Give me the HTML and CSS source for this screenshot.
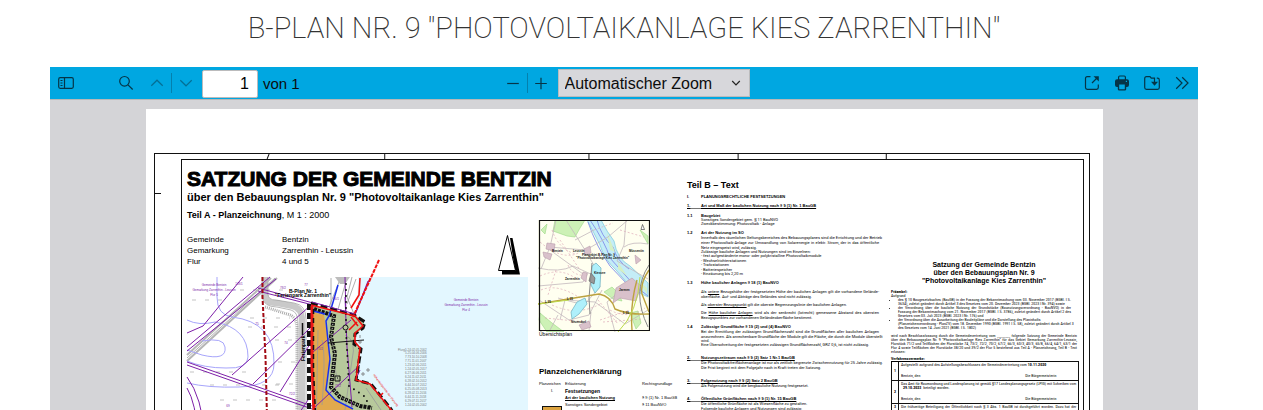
FILE: index.html
```html
<!DOCTYPE html>
<html lang="de">
<head>
<meta charset="utf-8">
<title>B-Plan Nr. 9</title>
<link rel="stylesheet" href="styles.css">
</head>
<body>
<h1 class="title">B-Plan Nr. 9 "Photovoltaikanlage Kies Zarrenthin"</h1>
<main class="viewer">
  <div class="toolbar">
    <div class="group">
      <button class="tool" aria-label="Sidebar umschalten"><svg width="16" height="16" viewBox="0 0 16 16"><rect x="0.7" y="2.7" width="14.6" height="10.6" rx="1.5"/><path d="M6.5 3v10M2.5 5.5h2M2.5 8h2M2.5 10.5h2"/></svg></button>
      <button class="tool search" aria-label="Suchen"><svg width="16" height="16" viewBox="0 0 16 16"><circle cx="6.5" cy="6.3" r="4.8"/><path d="M10 9.8l4.7 4.7"/></svg></button>
      <button class="tool" disabled aria-label="Vorherige Seite"><svg width="16" height="16" viewBox="0 0 16 16"><path d="M2.3 10.8L8 5.2l5.7 5.6"/></svg></button>
      <span class="separator"></span>
      <button class="tool" disabled aria-label="Nächste Seite"><svg width="16" height="16" viewBox="0 0 16 16"><path d="M2.3 5.2L8 10.8l5.7-5.6"/></svg></button>
      <input class="page-number" type="text" value="1" aria-label="Seite">
      <span class="page-count">von 1</span>
    </div>
    <div class="group">
      <button class="tool" aria-label="Verkleinern"><svg width="16" height="16" viewBox="0 0 16 16"><path d="M2.2 8.5h11.6"/></svg></button>
      <span class="separator"></span>
      <button class="tool" aria-label="Vergrößern"><svg width="16" height="16" viewBox="0 0 16 16"><path d="M1.2 8.500h11.600M7 2.700v11.600"/></svg></button>
      <span class="zoom-box">
        <select class="zoom" aria-label="Zoom"><option>Automatischer Zoom</option></select>
        <svg class="caret" width="10" height="8" viewBox="0 0 10 8"><path d="M1.2 2L5 5.8 8.8 2"/></svg>
      </span>
    </div>
    <div class="group end">
      <button class="tool" aria-label="Aktuelle Ansicht"><svg width="16" height="16" viewBox="0 0 16 16"><path d="M6.5 1.7H3.2Q1.5 1.7 1.5 3.4v9.2q0 1.7 1.7 1.7h9.4q1.7 0 1.7-1.7V9.5M8 8l5-5"/><path class="solid" d="M9.5 1.2H14.8V6.5z"/></svg></button>
      <button class="tool" aria-label="Drucken"><svg width="16" height="16" viewBox="0 0 16 16"><path d="M4.6 5V2.2Q4.6 1 5.8 1h4.4q1.2 0 1.2 1.2V5"/><path class="solid" fill-rule="evenodd" d="M3 4.2h10q2 0 2 2V10q0 2-2 2h-.8v2.2q0 1.4-1.4 1.4H5.2q-1.4 0-1.4-1.4V12H3q-2 0-2-2V6.200q0-2 2-2zM5.200 9.500v4.200q0 .6.6.6h4.400q.6 0 .6-.6V9.500zM11.800 5.800v1.200H13V5.800z"/></svg></button>
      <button class="tool" aria-label="Speichern"><svg width="16" height="16" viewBox="0 0 16 16"><path d="M10 3.200H7.300L6 1.700H2.500Q.7 1.700.7 3.500v9q0 1.800 1.800 1.800h11q1.800 0 1.800-1.800V5q0-1.800-1.800-1.800H12.800M10.500 2.500v6"/><path class="solid" d="M7 6.800h7L10.500 10.800z"/></svg></button>
      <button class="tool" aria-label="Werkzeuge"><svg width="16" height="16" viewBox="0 0 16 16"><path d="M2.200 2.300L8 8l-5.800 5.700M8.200 2.300L14 8l-5.800 5.700"/></svg></button>
    </div>
  </div>

  <div class="stage">
  <article class="sheet">
    <div class="frame">
      <svg class="rule-left" width="26" height="260" viewBox="0 0 26 260"><path d="M0 39.500h6"/></svg>
      <div class="frame-body">
      <svg class="rule-top" height="5" viewBox="0 0 902 5" preserveAspectRatio="none"><path d="M88 0L86 5M203.500 0v5M407.500 0v5M556.500 0v5M704.500 0v5"/></svg>
      <div class="plan">

        <section class="part-a">
          <h2 class="plan-title">SATZUNG DER GEMEINDE BENTZIN</h2>
          <p class="plan-subtitle">über den Bebauungsplan Nr. 9 "Photovoltaikanlage Kies Zarrenthin"</p>
          <p class="plan-part"><b>Teil A - Planzeichnung</b>, M 1 : 2000</p>
          <div class="meta-row">
            <dl class="meta"><dt>Gemeinde</dt><dd>Bentzin</dd><dt>Gemarkung</dt><dd>Zarrenthin - Leussin</dd><dt>Flur</dt><dd>4 und 5</dd></dl>
            <svg width="24" height="42" viewBox="497 234 24 42"><path d="M510 238h2.500L520 274.500H502v-4h13z" fill="#000"/><path d="M507.500 235.500L498.500 270.500H515.500z" fill="#fff" stroke="#000"/></svg>
          </div>
          <svg class="site-map" viewBox="187 277 341 160">
            <path fill="#e3f7ff" d="M358 277H528V437H375L355 380z"/>
            <g fill="none" stroke="#9a9a9a">
              <path stroke="#c9c9c9" stroke-width="6" d="M265 277v18q1 9 12 8l15 3q10 2 10 14v117"/>
              <path stroke-width=".7" d="M262 277v20q2 10 15 10l14 3q7 2 7 13v114M268 277v17q0 6 8 6l18 3q12 2 12 16v118"/>
              <path stroke-width="3" stroke="#aaa" stroke-dasharray="1 1" d="M265 307l22 7q10 2 10 15v100"/>
              <path stroke-width="2" stroke="#b5b5b5" d="M271 278L187 355M277 278L187 361"/>
              <path stroke-width=".8" d="M275 278L187 358M331 278v32M345 285l-8 28M341 277l-12 30M325 320v60M352 277l-5 20 7 17M356 279l-9 25"/>
              <path stroke-width=".6" stroke-dasharray="4 9" d="M240 290h45M250 318h40M248 327h45M275 340h20M278 362h20M190 372h60M210 385h70M220 400h60M276 384h20M192 300h30"/>
              <path fill="#bdbdbd" stroke="none" d="M335 277h15l-5 7h-5z"/>
            </g>
            <g fill="none" stroke="#a7a5fb" stroke-width="1">
              <path d="M217 277v20q0 18 15 20 43 5 42 47 0 22-35 23-30 1-52-4M187 320q12 6 28 2 33 6 33 35 0 12-22 11-22 0-39-7M202 341q22-4 23 6 2 14-23 8l-15-5"/>
            </g>
            <g fill="none" stroke="#7d1fa8" stroke-width="1">
              <path d="M243 277L203 326l-16 7M270 277L187 347M276 279L187 351M187 362L315 407M187 365l128 45M258 288l55 15M258 291l55 14M311 305L232 375M311 327L253 384M325 320L280 392M308 400L283 437M187 377q15 20 18 60M187 388q9 15 11 49M345 277l4 160M360 370l-30 67"/>
            </g>
            <path fill="#b7c99c" d="M312 305l50 13 3 8-9 8-2 10 7 5-3 14-3 17 14 4 21 26v27h-78z"/>
            <path fill="#e1a94e" d="M313 312l11 3 3 20 3 23-4 32 9 10 17 9 3 28h-42z"/>
            <g fill="none" stroke="#999" stroke-width=".8"><path d="M345 335q12 5 7 25l-7 50M337 350q-6 20 4 35M366 388l17 25M318 330l-2 100M322 340q4 15 0 65"/></g>
            <path fill="none" stroke="#7d1fa8" stroke-width="1" d="M345 297l2 50 5 60M351 320L313 352M360 365l-45 42M370 278l-15 37"/>
            <path fill="none" stroke="#111" stroke-width="4" stroke-dasharray="3 1" d="M314 309l20 7-3 21 4 17-4 33 9 10 20 9 12 2"/>
            <path fill="none" stroke="#ddd" stroke-width="1" stroke-dasharray="1 3" d="M334 316l-3 21 4 17-4 33 9 10 20 9"/>
            <path fill="none" stroke="#1b30ee" stroke-width="1.500" d="M338 285l-9 31-3 5 2 20 2 18-4 31 9 10 18 9M313 311l12 3"/>
            <path fill="none" stroke="#111" stroke-width="2" stroke-linecap="round" stroke-dasharray="0 6" d="M346 284v47l3 55 15 10 20 35"/>
            <circle cx="345.500" cy="327.500" r="2.500" fill="#b7c99c" stroke="#111"/>
            <path fill="none" stroke="#111" d="M328 343l36-3M335 376h5v5h-5zM337 378h1"/>
            <path fill="none" stroke="#111" stroke-width="4" stroke-dasharray="6 3" d="M309 304v133"/>
            <path fill="none" stroke="#ed1515" stroke-width="3" d="M312 306v60l3 71"/>
            <path fill="none" stroke="#111" stroke-width="1.500" stroke-dasharray="5 4" d="M313.500 309v60l3 68"/>
            <path fill="none" stroke="#111" stroke-width="3" stroke-dasharray="7 3" d="M311 303l43 12 11 7-2 6-8 6-1 10 7 5-5 31 15 4 20 25 10 18"/>
            <path fill="none" stroke="#f01010" stroke-width="1.600" d="M311 305l44 11 8 10-8 7v9l5 6-4 32 14 4 22 27M360 278l-1 17-8 13M357 322l-8 8"/>
            <path fill="none" stroke="#7d1fa8" stroke-width="1" d="M312 302l43 12 13-33"/>
            <path fill="none" stroke="#f01010" stroke-width="2" stroke-dasharray="4 1" d="M379 260L353 317"/>
            <path fill="none" stroke="#f01010" stroke-width="1.500" d="M380 396l3-3M358 326l-7-9"/>
            <path fill="none" stroke="#a10a14" stroke-width="2" stroke-dasharray="4 2" d="M262.500 277v20l3 60 2 80"/>
            <g fill="none" stroke="#777" stroke-width=".8"><path d="M358 342h4M360 340v4M361 374h4M363 372v4M366 370h4M368 368v4M360 335v3"/></g>
            <g class="map-label" text-anchor="middle">
              <text x="214" y="286">Gemeinde Bentzin</text><text x="214" y="291">Gemarkung Zarrenthin - Leussin</text><text x="214" y="296">Flur 5</text>
              <text x="466" y="301">Gemeinde Bentzin</text><text x="466" y="306">Gemarkung Zarrenthin - Leussin</text><text x="466" y="311">Flur 4</text>
              <text x="239" y="285">128/1</text><text x="283" y="289">78/2</text><text x="306" y="286">77</text><text x="336" y="300">76/1</text><text x="257" y="325">75</text><text x="286" y="344">74</text><text x="292" y="395">72/2</text><text x="228" y="407">69</text><text x="320" y="350">73/2</text><text x="338" y="387">73/2</text>
            </g>
            <text class="map-name" x="303" y="293" text-anchor="middle">B-Plan Nr. 1</text><text class="map-name" x="303" y="297" text-anchor="middle">"Ferienpark Zarrenthin"</text>
            <text class="map-name" transform="translate(305 361) rotate(-90)">Ferienpark</text>
            <path stroke="#111" stroke-width="1.500" d="M302.500 323v12"/>
            <text class="map-note" transform="translate(373 375) rotate(53)">Höhenfestpunkte der Planung</text>
            <g class="map-dates">
              <text x="398" y="351">Flurg.</text>
              <text x="405" y="351">5.24.02.05.2002</text><text x="405" y="354">5.25.04.06.2006</text><text x="405" y="358">7.73.10.10.2008</text><text x="405" y="362">7.71.11.01.2007</text><text x="405" y="366">1.23.02.06.2011</text><text x="405" y="370">1.24.02.05.2017</text><text x="405" y="374">6.27.06.06.2011</text><text x="405" y="378">6.24.11.02.2011</text><text x="405" y="382">6.28.02.10.2012</text><text x="405" y="386">6.44.10.07.2012</text><text x="405" y="390">6.25.05.08.2013</text><text x="405" y="394">6.28.02.11.2016</text><text x="405" y="398">6.44.11.11.2018</text><text x="405" y="402">6.29.07.11.2017</text><text x="405" y="406">1.24.02.05.2002</text>
            </g>
          </svg>
        </section>

        <section class="legend">
          <figure class="overview">
            <svg viewBox="538 220 112 112">
              <path fill="#fffff0" d="M538 220h112v112H538z"/>
              <path fill="#cdf1b6" stroke="#9bd884" stroke-width=".6" d="M555 220h30l-5 8-5 9-8-1-14-5zM541 230l6-6-2 10zM540 313l12 10 12 9h-17l-8-12zM604 292l8-5 6 6 4 8-9-2zM640 230l8 6v8zM630 313l8-2 3 12-5 6z"/>
              <path fill="#c4edf7" stroke="#75c7dc" stroke-width=".7" d="M587 220h14q6 12 13 21 3 18 16 25l18 17v14l-12-6q-10-8-20-21-12-11-16-25-6-12-13-25z"/>
              <path fill="none" stroke="#8998ec" stroke-width="1" d="M590 220q15 22 20 38l24 27 14 11M597 220q4 16 16 27 4 14 16 22M588 222q8 24 22 44l18 19"/>
              <path fill="#d5f0c5" d="M607 232l8 20-5-2zM618 262l9 14-9-7zM639 281l8 7v6z"/>
              <g fill="none" stroke="#c3b8bc" stroke-width=".8"><path d="M538 268q22 5 35-2l20 9M556 220q-3 14-6 27l-9 22M549 247l36 3 10 17 5 20-16 18-26-7M585 250L566 220M586 250l22-13 20-17M626 220l-2 25-7 16 31 18M624 247q8-6 24-3M539 300l30 20 20-5 13-25M538 286l45-4 5-9M575 240l19-10M560 320l5-20 30 2 30 22 23-14M615 332l-8-30 12-10M589 331l2-19M550 330l8-15M550 250l33 24"/></g>
              <g fill="none" stroke="#dca9b8" stroke-width=".7" stroke-dasharray="2 2"><path d="M540 242q24 20 40 10M540 276q20-9 35 2M552 230q7 20 24 24M568 265q5 12 20 10M594 230l19-7M552 305q26 12 50-2M610 310q18 10 35-2M620 230l24 7M541 290q16-7 39 8M603 322l40-3M560 240l20 30M598 300l20 24M600 320l30-10M545 318l40 4M556 270l-8 25"/></g>
              <path fill="#d9c1cb" stroke="#b89cab" stroke-width=".6" d="M547 243l8 1-1 7-8-2zM543 252l9 2-2 6-6-3zM584 249l6-3 1 7-6 2zM583 272l4 1-1 9-5-4zM616 288l16-10 9 8-5 15-16-3-7 5zM579 325l10-4 2 6-9 3zM635 255l6 5-5 4z"/>
              <path fill="#aff0fb" stroke="#6caebd" stroke-width=".7" d="M592 266l4-3 5 5-1 19-5 6-4-8zM577 302l8-4 2 6-8 10-7 5-1-7z"/>
              <path fill="#999" stroke="#555" stroke-width=".6" d="M591 273l4 5-1 6-5-3z"/>
              <path fill="none" stroke="#888" d="M592 263l-3 35 1 16M649 265q-18 27-1 62"/>
              <path fill="none" stroke="#bca23f" stroke-width="1.400" d="M538 304l30-5 31-5q12 2 16 15 13 6 34 5M649 270q-9 13-7 24l7 18M637 280q-7 24-5 50"/>
              <path fill="none" stroke="#bddb4b" d="M618 332q20-20 22-55M538 304l31-4"/>
              <g class="place-label"><text x="552" y="252">Bentzin</text><text x="573" y="252">Leussin</text><text x="582" y="256">Plangebiet B-Plan Nr. 9</text><text x="576" y="259">"Photovoltaikanlage Kies Zarrenthin"</text><text x="565" y="280">Zarrenthin</text><text x="619" y="291">Jarmen</text><text x="571" y="323">Neuendorf</text><text x="545" y="303">L 35</text><text x="567" y="300">L 35</text><text x="623" y="314">L 35</text><text x="594" y="274">Kiessee</text><text x="629" y="252">Müssentin</text></g>
              <path fill="#fff" stroke="#333" stroke-width=".6" d="M642.500 224.500l-1.500 5h3.500z"/>
              <path fill="none" stroke="#111" stroke-width="1.200" d="M539.500 220.500h110v110h-110z"/>
            </svg>
            <figcaption>Übersichtsplan</figcaption>
          </figure>
          <h3 class="legend-title">Planzeichenerklärung</h3>
          <div class="legend-grid">
            <span>Planzeichen</span><span>Erläuterung</span><span>Rechtsgrundlage</span>
            <span class="center">I.</span><b class="big">Festsetzungen</b><span></span>
            <span></span><b><u>Art der baulichen Nutzung</u></b><span>§ 9 (1) Nr. 1 BauGB</span>
            <svg width="24" height="16" viewBox="0 0 24 16"><rect x="3.500" y="3.500" width="19" height="12" fill="#dca33f" stroke="#111"/></svg><span>Sonstiges Sondergebiet</span><span>§ 11 BauNVO</span>
          </div>
        </section>

        <section class="part-b">
          <h3 class="part-title">Teil B – Text</h3>
          <div class="clause"><b>I.</b><h4>PLANUNGSRECHTLICHE FESTSETZUNGEN</h4></div>
          <div class="clause ruled"><b>1.</b><h4>Art und Maß der baulichen Nutzung nach § 9 (1) Nr. 1 BauGB</h4></div>
          <div class="clause"><b>1.1</b><div><h4>Baugebiet</h4><p>Sonstiges Sondergebiet gem. § 11 BauNVO</p><p>Zweckbestimmung: Photovoltaik - Anlage</p></div></div>
          <div class="clause"><b>1.2</b><div><h4>Art der Nutzung im SO</h4>
            <p class="loose full">Innerhalb des räumlichen Geltungsbereiches des Bebauungsplanes sind die Errichtung und der Betrieb<br>einer Photovoltaik-Anlage zur Umwandlung von Solarenergie in elektr. Strom, der in das öffentliche</p>
            <p class="loose">Netz eingespeist wird, zulässig.</p>
            <p>Zulässige bauliche Anlagen und Nutzungen sind im Einzelnen:</p><p>- fest aufgeständerte mono- oder polykristalline Photovoltaikmodule</p><p class="loose">- Wechselrichterstationen</p><p>- Trafostationen</p><p class="loose">- Batteriespeicher</p><p>- Einzäunung bis 2,20 m</p></div></div>
          <div class="clause"><b>1.3</b><div><h4>Höhe baulicher Anlagen § 18 (1) BauNVO</h4>
            <p class="loose full apart">Als <u>untere</u> Bezugshöhe der festgesetzten Höhe der baulichen Anlagen gilt die vorhandene Gelände-</p><p class="loose">oberfläche. Auf- und Abträge des Geländes sind nicht zulässig.</p>
            <p class="apart">Als <u>oberster Bezugspunkt</u> gilt die oberste Begrenzungslinie der baulichen Anlagen.</p>
            <p class="full apart">Die <u>Höhe baulicher Anlagen</u> wird als der senkrecht (lotrecht) gemessene Abstand des obersten</p><p class="loose">Bezugspunktes zur vorhandenen Geländeoberfläche bestimmt.</p></div></div>
          <div class="clause"><b>1.4</b><div><h4>Zulässige Grundfläche § 19 (2) und (4) BauNVO</h4>
            <p class="loose full">Bei der Ermittlung der zulässigen Grundflächenzahl sind die Grundflächen aller baulichen Anlagen<br>anzurechnen. Als anrechenbare Grundfläche der Module gilt die Fläche, die durch die Module überstellt</p><p>wird.</p><p>Eine Überschreitung der festgesetzten zulässigen Grundflächenzahl, GRZ 0,6, ist nicht zulässig.</p></div></div>
          <div class="clause wide ruled"><b>2.</b><h4>Nutzungszeitraum nach § 9 (2) Satz 1 Nr.1 BauGB</h4></div>
          <div class="clause-text"><p>Die Photovoltaikfreiflächenanlage ist nur als zeitlich begrenzte Zwischennutzung für 25 Jahre zulässig.</p><p class="loose">Die Frist beginnt mit dem Folgejahr nach in Kraft treten der Satzung.</p></div>
          <div class="clause wide ruled"><b>3.</b><h4>Folgenutzung nach § 9 (2) Satz 2 BauGB</h4></div>
          <div class="clause-text"><p>Als Folgenutzung wird die bergbauliche Nutzung festgesetzt.</p></div>
          <div class="clause wide ruled"><b>4.</b><h4>Öffentliche Grünflächen nach § 9 (1) Nr. 15 BauGB</h4></div>
          <div class="clause-text"><p>Die öffentliche Grünfläche ist als Wiesenfläche zu gestalten.</p><p class="loose">Folgende bauliche Anlagen und Nutzungen sind zulässig:</p></div>
        </section>

        <section class="statute">
          <h3 class="statute-title">Satzung der Gemeinde Bentzin<br>über den Bebauungsplan Nr. 9<br>"Photovoltaikanlage Kies Zarrenthin"</h3>
          <p><b>Präambel:</b></p><p>Aufgrund</p>
          <ul class="laws">
            <li><p class="full">des § 10 Baugesetzbuches (BauGB) in der Fassung der Bekanntmachung vom 03. November 2017 (BGBl. I S.</p><p>3634), zuletzt geändert durch Artikel 3 des Gesetzes vom 20. Dezember 2023 (BGBl. 2023 I Nr. 394) sowie</p></li>
            <li><p class="full">der Verordnung über die bauliche Nutzung der Grundstücke (Baunutzungsverordnung - BauNVO) in der<br>Fassung der Bekanntmachung vom 21. November 2017 (BGBl. I S. 3786), zuletzt geändert durch Artikel 2 des</p><p>Gesetzes vom 03. Juli 2023 (BGBl. 2023 I Nr. 176) und</p></li>
            <li><p>der Verordnung über die Ausarbeitung der Bauleitpläne und die Darstellung des Planinhalts</p><p class="full">(Planzeichenverordnung - PlanZV) vom 18. Dezember 1990 (BGBl. 1991 I S. 58), zuletzt geändert durch Artikel 3</p><p>des Gesetzes vom 14. Juni 2021 (BGBl. I S. 1802)</p></li>
          </ul>
          <div class="resolution"><p class="full">wird nach Beschlussfassung durch die Gemeindevertretung vom ________ folgende Satzung der Gemeinde Bentzin<br>über den Bebauungsplan Nr. 9 "Photovoltaikanlage Kies Zarrenthin" für das Gebiet Gemarkung Zarrenthin-Leussin,<br>Flurstück 71/2 und Teilflächen der Flurstücke 74, 73/2, 72/2, 70/2, 67/2, 66/3, 60/3, 40/3, 65/8, 66/4, 64/1, 63/1 der<br>Flur 4 sowie Teilflächen der Flurstücke 38/20 und 39/2 der Flur 5 bestehend aus Teil A - Planzeichnung, Teil B - Text</p><p>erlassen:</p></div>
          <p><b><u>Verfahrensvermerke:</u></b></p>
          <table class="notes">
            <tr><th>1</th><td><p>Aufgestellt aufgrund des Aufstellungsbeschlusses der Gemeindevertretung vom <b>10.11.2020</b></p><div class="sign"><span>Bentzin, den</span><span>Die Bürgermeisterin</span></div></td></tr>
            <tr><th>2</th><td><p class="full">Das Amt für Raumordnung und Landesplanung ist gemäß §17 Landesplanungsgesetz (LPlG) mit Schreiben vom</p><p>&nbsp; <b>29.10.2023</b> &nbsp;beteiligt worden.</p><div class="sign"><span>Bentzin, den</span><span>Die Bürgermeisterin</span></div></td></tr>
            <tr><th>3</th><td><p class="full">Die frühzeitige Beteiligung der Öffentlichkeit nach § 3 Abs. 1 BauGB ist durchgeführt worden. Dazu hat der</p></td></tr>
          </table>
        </section>
      </div>
      </div>
    </div>
  </article>
  </div>
</main>
</body>
</html>
```
FILE: styles.css
```css
* { box-sizing: border-box; }
body {
  margin: 0;
  padding: 0 65px 0 50px;
  height: 100vh;
  display: flex;
  flex-direction: column;
  overflow: hidden;
  background: #fff;
  font-family: "Liberation Sans", Arial, sans-serif;
}
h2, h3, h4, p, dl, dd, ul, figure { margin: 0; padding: 0; }
.title {
  margin: 0;
  padding: 8px 0 19px;
  font: 200 29px/40px Roboto, sans-serif;
  text-align: center;
  text-transform: uppercase;
  white-space: nowrap;
  color: #333;
}
.viewer { flex: 1; min-height: 0; display: flex; flex-direction: column; background: #d4d4d7; }

.toolbar {
  flex: none;
  height: 33px;
  display: grid;
  grid-template-columns: 1fr auto 1fr;
  background: #00a7e1;
  border-bottom: 1px solid #b8b8b8;
  padding: 0 2px;
}
.group { display: flex; align-items: center; }
.end { justify-content: flex-end; gap: 2px; }
.tool {
  width: 28px; height: 28px;
  padding: 0; border: 0;
  background: none;
  display: grid; place-items: center;
  color: #053547;
}
.tool:disabled { color: #046f95; }
.tool svg, .caret { fill: none; stroke: currentColor; stroke-width: 1.2; }
.tool .solid { fill: currentColor; stroke: none; }
.search { margin-left: 32px; margin-right: 3px; }
.separator { width: 1px; height: 20px; background: #0480ad; }
.page-number {
  width: 56px; height: 28px;
  margin: 1px 5px 0 2px;
  padding: 0 8px;
  border: 1px solid #bbbbbc;
  border-radius: 2px;
  background: #fff;
  font: 16px "Liberation Sans", sans-serif;
  text-align: right;
}
.page-count { font-size: 15px; color: #0c0c0d; }
.zoom-box { display: grid; align-items: center; margin-left: 2px; }
.zoom, .caret { grid-area: 1 / 1; }
.zoom {
  appearance: none;
  width: 192px; height: 28px;
  padding: 0 6px;
  border: 1px solid #bbbbbc;
  background: #d7d7db;
  font: 16px "Liberation Sans", sans-serif;
  color: #0c0c0d;
}
.caret { justify-self: end; margin-right: 9px; pointer-events: none; color: #222; }

.stage { flex: 1; min-height: 0; overflow: hidden; padding: 9px 95px 0 96px; }
.sheet { background: #fff; padding: 44px 13px 0 8px; color: #000; }
.frame {
  display: grid;
  grid-template-columns: 26px minmax(0, 1fr);
  border: solid #111;
  border-width: 1px 1px 0;
  padding-right: 5px;
}
.rule-left, .rule-top { display: block; stroke: #111; fill: none; }
.rule-top { width: 100%; }
.plan {
  display: grid;
  grid-template-columns: 356fr 149fr 204fr 192fr;
  border: solid #111;
  border-width: 1px 1px 0;
  font-size: 4px;
  line-height: 4px;
  white-space: nowrap;
  color: #000;
}
.plan > section { min-width: 0; }

.part-a { padding: 8px 10px 0 5px; color: #000; }
.plan-title { font-size: 21px; line-height: 22px; -webkit-text-stroke: 1px #000; }
.plan-subtitle { font-size: 11px; line-height: 14px; font-weight: bold; }
.plan-part { margin-top: 4px; font-size: 9px; line-height: 14px; }
.meta-row { display: flex; justify-content: space-between; padding-right: 7px; margin-top: 12px; height: 43px; }
.meta { display: grid; grid-template-columns: 95px auto; align-content: start; font-size: 8px; line-height: 11px; }
.site-map { display: block; width: 100%; overflow: visible; }
.map-label { font-size: 3px; fill: #7d1fa8; }
.map-name { font-size: 5px; font-weight: bold; fill: #000; }
.map-note { font-size: 3px; fill: #f01010; }
.map-dates { font-size: 3px; fill: #777; }

.legend { padding-top: 60px; }
.overview { width: 112px; }
.overview svg { display: block; width: 100%; }
.overview figcaption { font-size: 5px; line-height: 5px; padding-left: 1px; }
.place-label { font-size: 3px; font-weight: bold; fill: #111; }
.legend-title { margin: 30px 0 6px 1px; font-size: 8px; line-height: 9px; color: #000; }
.legend-grid { display: grid; grid-template-columns: 26px 77px 1fr; row-gap: 3px; padding-left: 1px; }
.center { text-align: center; }
.big { font-size: 5px; }

.part-b { padding: 20px 12px 0 0; }
.part-b p { font-family: Roboto, "Liberation Sans", sans-serif; }
.part-title { font-size: 9px; line-height: 10px; color: #000; }
.clause { display: grid; grid-template-columns: 14px minmax(0, 1fr); margin-top: 5px; }
.clause-text { padding-left: 14px; }
.wide { margin-top: 9px; }
h4 { font-size: 4px; line-height: 4px; }
.ruled { text-decoration: underline; width: max-content; }
.ruled b { border-bottom: 1px solid #777; }
.loose { line-height: 5px; }
.full { text-align-last: justify; }
.apart { margin-top: 4px; }

.statute { padding: 101px 6px 0 0; font-family: "Liberation Sans Narrow", "Roboto Condensed", Roboto, sans-serif; }
.statute-title { margin-bottom: 5px; font: bold 7px/8px "Liberation Sans", sans-serif; text-align: center; color: #000; }
.laws { padding: 0 6px 0 7px; list-style: disc; }
.resolution { margin: 4px 0 3px; }
.notes { width: 100%; border-collapse: collapse; }
.notes th, .notes td { border: 1px solid #111; vertical-align: top; padding: 1px 2px; }
.notes th { width: 12px; vertical-align: middle; }
.sign { display: flex; justify-content: space-between; padding: 7px 20px 1px 0; }
```
